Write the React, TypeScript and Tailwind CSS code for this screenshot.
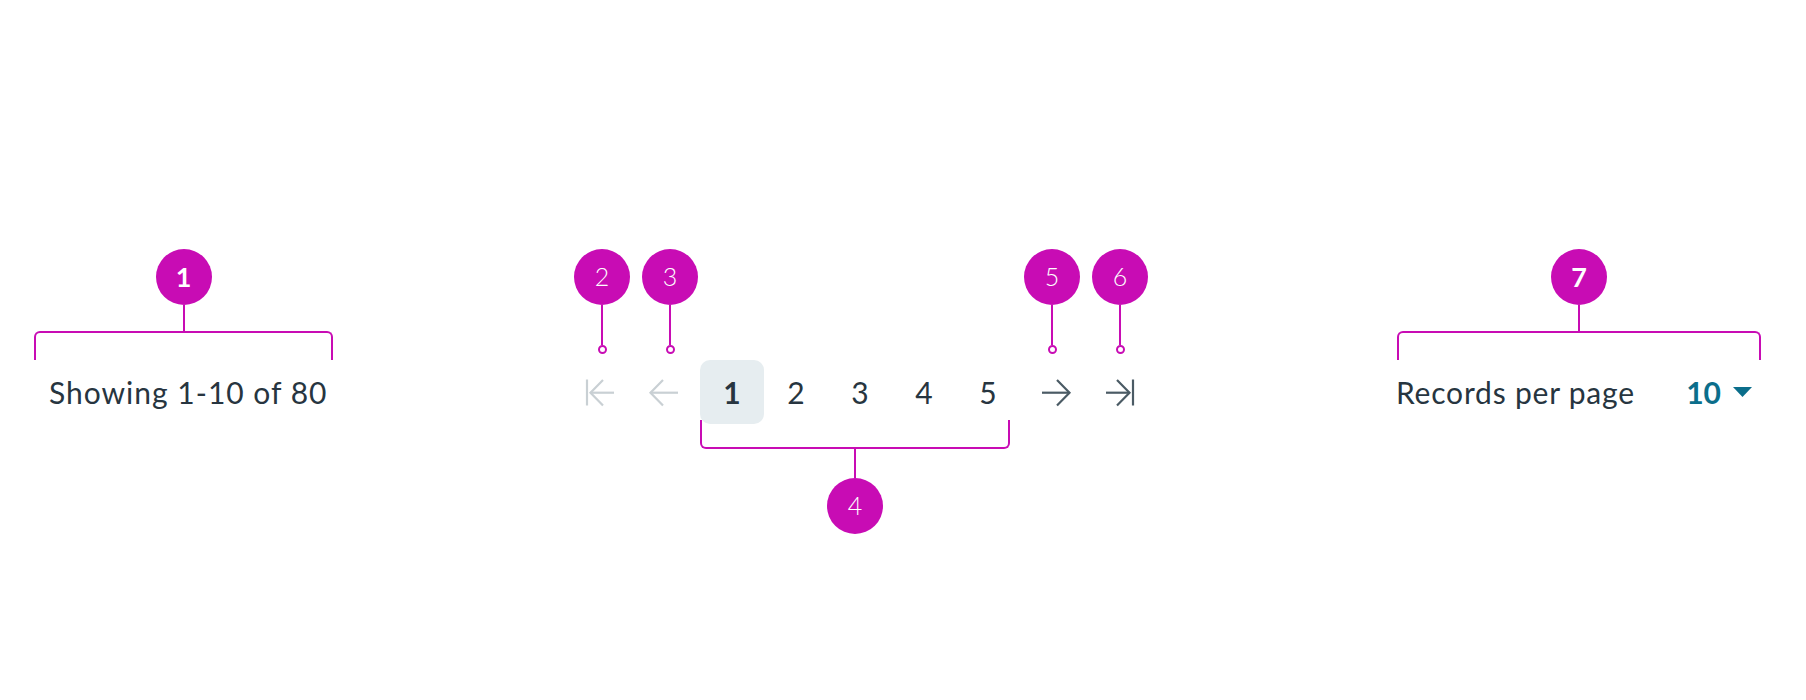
import React from "react";

const MAG = "bg-[#c80cb4]";

function Badge({ n, bold }: { n: string; bold?: boolean }) {
  return (
    <div
      className={`w-[56px] h-[56px] rounded-full ${MAG} flex items-center justify-center text-white shrink-0 ${
        bold ? "text-[27px] font-bold" : "text-[25px] font-light"
      }`}
    >
      {n}
    </div>
  );
}

function Pin({ n, shift }: { n: string; shift: string }) {
  return (
    <div className={`flex flex-col items-center h-[111px] ${shift}`}>
      <Badge n={n} />
      <div className={`w-[2px] h-[40px] ${MAG}`} />
      <div className="w-[9px] h-[9px] rounded-full border-2 border-[#c80cb4] bg-white" />
    </div>
  );
}

function IconBtn({ kind }: { kind: "first" | "prev" | "next" | "last" }) {
  const disabled = kind === "first" || kind === "prev";
  const color = disabled ? "#c9d0d4" : "#4b5b65";
  let paths: React.ReactNode = null;
  if (kind === "first") {
    paths = (
      <>
        <path d="M15 19.5 V45.5" />
        <path d="M18.5 32.7 H42" />
        <path d="M31 20 L18.5 32.7 L31 45.4" />
      </>
    );
  } else if (kind === "prev") {
    paths = (
      <>
        <path d="M14.5 32.7 H42" />
        <path d="M27 20 L14.5 32.7 L27 45.4" />
      </>
    );
  } else if (kind === "next") {
    paths = (
      <>
        <path d="M22 32.7 H49.5" />
        <path d="M37 20 L49.5 32.7 L37 45.4" />
      </>
    );
  } else {
    paths = (
      <>
        <path d="M49 19.5 V45.5" />
        <path d="M22 32.7 H45.5" />
        <path d="M33 20 L45.5 32.7 L33 45.4" />
      </>
    );
  }
  return (
    <div className="w-[64px] h-[64px]">
      <svg width="64" height="64" viewBox="0 0 64 64" fill="none" stroke={color} strokeWidth="2.2" strokeLinecap="butt" strokeLinejoin="miter">
        {paths}
      </svg>
    </div>
  );
}

function Page({ n, active }: { n: string; active?: boolean }) {
  return (
    <div
      className={`w-[64px] h-[64px] flex items-center justify-center rounded-[10px] text-[30px] ${
        active ? "bg-[#e6edf0] font-bold" : "font-normal"
      }`}
    >
      {n}
    </div>
  );
}

function TopCallout({ n, width }: { n: string; width: string }) {
  return (
    <div className={`flex flex-col items-center ${width}`}>
      <Badge n={n} bold />
      <div className={`w-[2px] h-[26px] ${MAG}`} />
      <div className="w-full h-[29px] border-2 border-b-0 border-[#c80cb4] rounded-t-[6px]" />
    </div>
  );
}

export default function App() {
  return (
    <div
      className="w-[1806px] h-[700px] bg-white text-[#273540] overflow-hidden"
      style={{ fontFamily: "Lato, 'Noto Sans', sans-serif" }}
    >
      <div className="flex items-start pt-[249px]">
        {/* Left: showing */}
        <div className="ml-[34px] w-[299px] flex flex-col">
          <TopCallout n="1" width="w-[299px]" />
          <div className="h-[64px] flex items-center pl-[15px] text-[30px] tracking-[1px] whitespace-nowrap">
            Showing 1-10 of 80
          </div>
        </div>

        {/* Middle: pagination */}
        <div className="ml-[239px] flex items-start">
          <div className="flex flex-col items-center w-[64px]">
            <Pin n="2" shift="-translate-x-[2px]" />
            <IconBtn kind="first" />
          </div>
          <div className="flex flex-col items-center w-[64px]">
            <Pin n="3" shift="translate-x-[2px]" />
            <IconBtn kind="prev" />
          </div>
          <div className="flex flex-col mt-[111px]">
            <div className="flex">
              <Page n="1" active />
              <Page n="2" />
              <Page n="3" />
              <Page n="4" />
              <Page n="5" />
            </div>
            <div className="w-[310px] flex flex-col items-center -mt-[4px]">
              <div className="w-full h-[29px] border-2 border-t-0 border-[#c80cb4] rounded-b-[6px]" />
              <div className={`w-[2px] h-[29px] ${MAG}`} />
              <Badge n="4" />
            </div>
          </div>
          <div className="flex flex-col items-center w-[64px]">
            <Pin n="5" shift="" />
            <IconBtn kind="next" />
          </div>
          <div className="flex flex-col items-center w-[64px]">
            <Pin n="6" shift="translate-x-[4px]" />
            <IconBtn kind="last" />
          </div>
        </div>

        {/* Right: records per page */}
        <div className="ml-[249px] w-[364px] flex flex-col">
          <TopCallout n="7" width="w-[364px]" />
          <div className="h-[64px] flex items-center justify-between pr-[9px] text-[30px]">
            <span className="-ml-[1px] tracking-[0.8px] whitespace-nowrap">Records per page</span>
            <span className="flex items-center gap-[12px] text-[#0b6e8b] font-bold">
              10
              <svg width="19" height="10" viewBox="0 0 19 10">
                <path d="M0 0 H19 L9.5 10 Z" fill="#0b6e8b" />
              </svg>
            </span>
          </div>
        </div>
      </div>
    </div>
  );
}
